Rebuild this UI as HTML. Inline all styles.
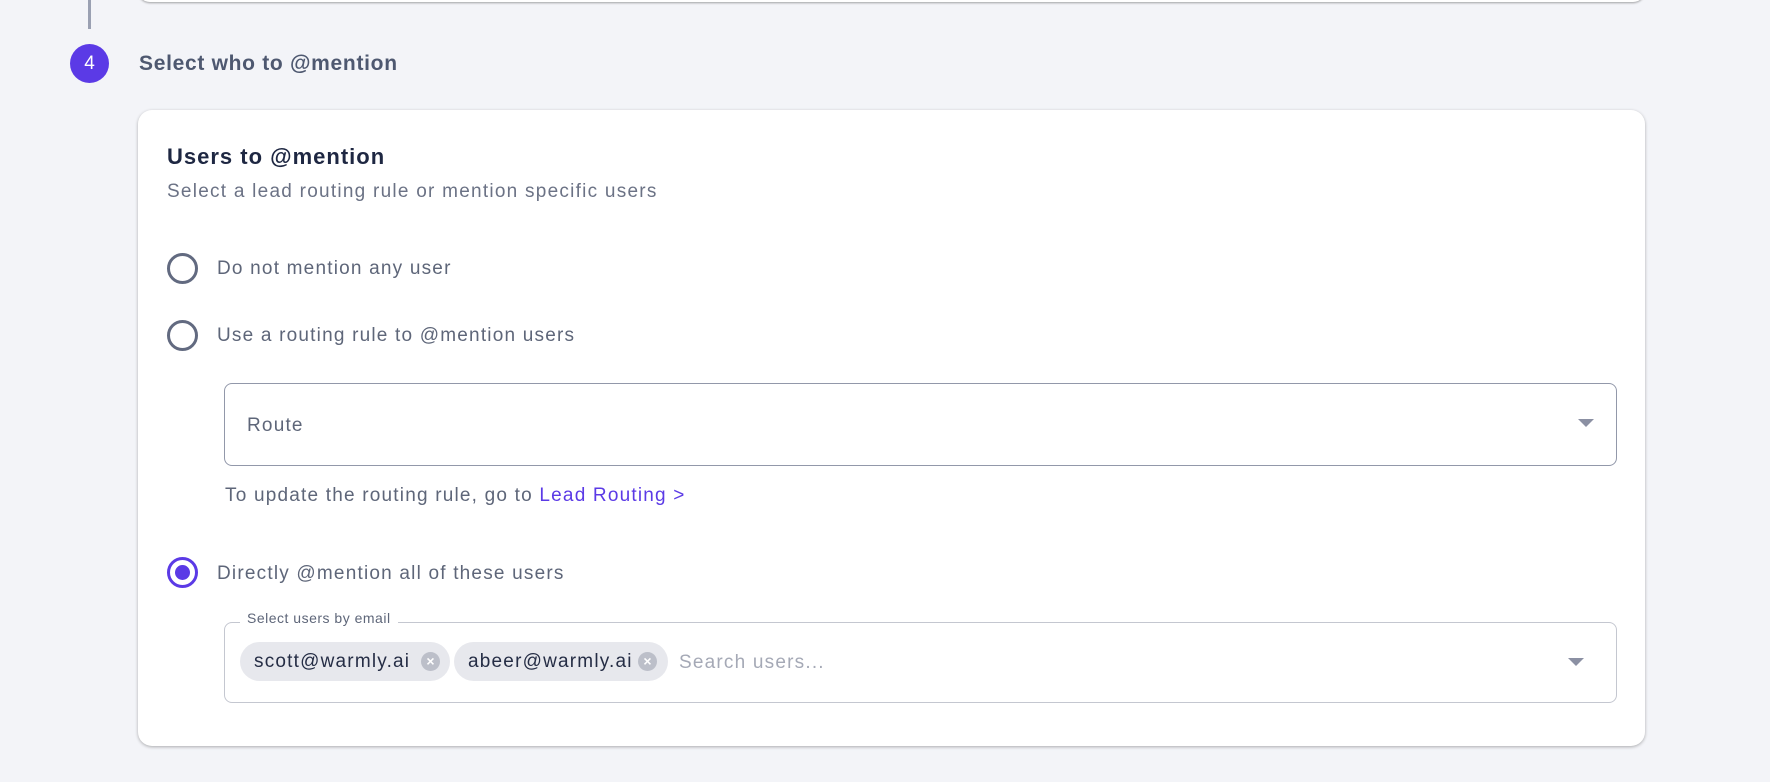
<!DOCTYPE html>
<html><head><meta charset="utf-8"><style>
*{box-sizing:border-box;margin:0;padding:0}
body{width:1770px;height:782px;background:#f3f4f8;font-family:"Liberation Sans",sans-serif;position:relative;overflow:hidden}
.abs{position:absolute}
.topcard{left:138px;top:-20px;width:1507px;height:22px;background:#fff;border-radius:0 0 12px 12px;box-shadow:0 1px 2px rgba(0,0,0,.35)}
.vline{left:88px;top:0;width:3px;height:29px;background:#9aa0b2}
.step{left:70px;top:44px;width:39px;height:39px;border-radius:50%;background:#5b3ae6;color:#fff;font-size:19px;text-align:center;line-height:39px}
.title{left:139px;top:52px;font-size:21px;font-weight:bold;color:#4e5870;letter-spacing:.7px}
.card{left:138px;top:110px;width:1507px;height:636px;background:#fff;border-radius:14px;box-shadow:0 1px 3px rgba(0,0,0,.3)}
.h{left:167px;top:144px;font-size:22px;font-weight:bold;color:#1e2742;letter-spacing:1px}
.sub{left:167px;top:181px;font-size:19px;color:#6b7285;letter-spacing:1.25px}
.radio{width:31px;height:31px;border-radius:50%;border:3px solid #626a80}
.lab{font-size:19px;color:#5e6679;letter-spacing:1.2px}
.box{border:1.5px solid #9298aa;border-radius:8px;background:#fff}
.arrow{width:0;height:0;border-left:8px solid transparent;border-right:8px solid transparent;border-top:8px solid #8b90a3}
.chip{top:642px;height:39px;border-radius:20px;background:#e7e8ed;font-size:19px;color:#252d45;line-height:39px;padding-left:14px;letter-spacing:1.2px}
.x{position:absolute;top:10px;width:19px;height:19px;border-radius:50%;background:#bcbfc9;color:#fff;font-size:14px;line-height:19px;text-align:center;font-weight:bold;letter-spacing:0}
</style></head><body>
<div class="abs topcard"></div>
<div class="abs vline"></div>
<div class="abs step">4</div>
<div class="abs title">Select who to @mention</div>
<div class="abs card"></div>
<div class="abs h">Users to @mention</div>
<div class="abs sub">Select a lead routing rule or mention specific users</div>

<div class="abs radio" style="left:167px;top:253px"></div>
<div class="abs lab" style="left:217px;top:258px">Do not mention any user</div>
<div class="abs radio" style="left:167px;top:320px"></div>
<div class="abs lab" style="left:217px;top:325px">Use a routing rule to @mention users</div>

<div class="abs box" style="left:224px;top:383px;width:1393px;height:83px"></div>
<div class="abs lab" style="left:247px;top:415px">Route</div>
<div class="abs arrow" style="left:1578px;top:419px"></div>
<div class="abs lab" style="left:225px;top:485px">To update the routing rule, go to <span style="color:#5b3ae6">Lead Routing &gt;</span></div>

<div class="abs radio" style="left:167px;top:557px;border-color:#5b3ae6"></div>
<div class="abs" style="left:175px;top:565px;width:15px;height:15px;border-radius:50%;background:#5b3ae6"></div>
<div class="abs lab" style="left:217px;top:563px">Directly @mention all of these users</div>

<div class="abs" style="left:224px;top:622px;width:1393px;height:81px;border:1px solid #c4c7d0;border-radius:8px"></div>
<div class="abs" style="left:240px;top:608px;background:#fff;padding:0 7px;font-size:14px;color:#5e6679;line-height:20px;letter-spacing:.5px">Select users by email</div>
<div class="abs chip" style="left:240px;width:210px">scott@warmly.ai<span class="x" style="left:181px">×</span></div>
<div class="abs chip" style="left:454px;width:214px">abeer@warmly.ai<span class="x" style="left:184px">×</span></div>
<div class="abs" style="left:679px;top:652px;font-size:19px;color:#a5a9b6;letter-spacing:1.2px">Search users...</div>
<div class="abs arrow" style="left:1568px;top:658px"></div>
</body></html>
